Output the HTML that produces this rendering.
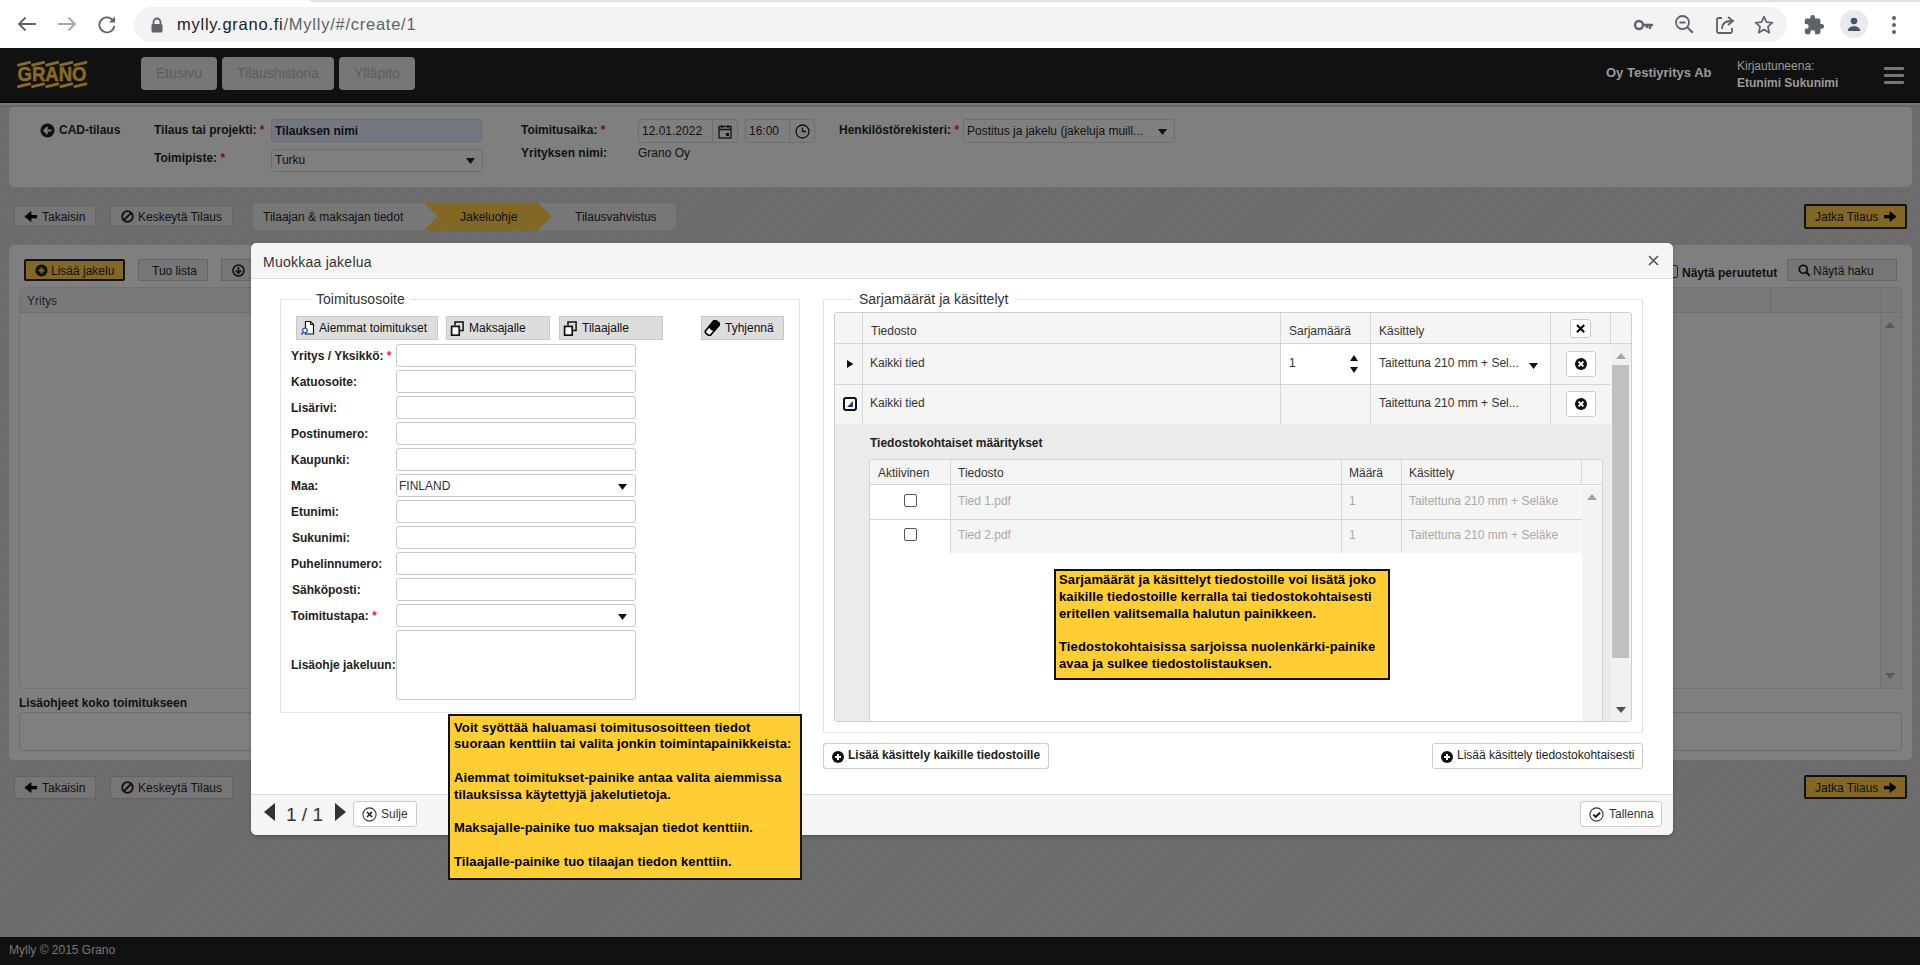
<!DOCTYPE html>
<html><head><meta charset="utf-8">
<style>
*{box-sizing:border-box;margin:0;padding:0}
html,body{width:1920px;height:965px;overflow:hidden}
body{position:relative;font-family:"Liberation Sans",sans-serif;font-size:12px;color:#111;background:#6c6c6c}
.a{position:absolute}
.t{position:absolute;white-space:nowrap;line-height:1}
.b{font-weight:bold}
/* chrome */
#chrome{left:0;top:0;width:1920px;height:48px;background:#fff}
#omni{left:134px;top:7px;width:1653px;height:35px;border-radius:18px;background:#f1f3f4}
/* header */
#hdr{left:0;top:48px;width:1920px;height:55px;background:#111}
.nav{top:57px;height:33px;border-radius:4px;background:#777;color:#5d5d5d;font-size:14px;text-align:center;line-height:33px}
/* page */
#page{left:0;top:103px;width:1920px;height:834px;background:#6c6c6c;
 background-image:repeating-linear-gradient(135deg,rgba(255,255,255,0) 0px,rgba(255,255,255,0) 9px,rgba(255,255,255,.015) 10px,rgba(255,255,255,0) 12px)}
.pnl{background:#7f7f7f;border-radius:5px}
.dbtn{background:#767676;border:1px solid #646464;color:#111;font-size:12px}
#foot{left:0;top:937px;width:1920px;height:28px;background:#111}

.mb{position:absolute;background:#ddd;border:1px solid #c8c8c8;}
.lbl{position:absolute;white-space:nowrap;line-height:1;font-weight:bold;font-size:12px;color:#222;left:291px}
.inp{position:absolute;left:396px;width:240px;height:23px;border:1px solid #c9c9c9;border-radius:3px;background:#fff}
.req{color:#e8262b}
.wb{position:absolute;background:#fff;border:1px solid #ccc;border-radius:3px}
.tip{position:absolute;background:#ffcd34;border:2px solid #111;font-weight:bold;font-size:13px;line-height:16.8px;color:#000;padding:0;white-space:nowrap;letter-spacing:.12px}
</style></head>
<body>
<!-- CHROME BAR -->
<div id="chrome" class="a"></div>
<div class="a" style="left:310px;top:0;width:1610px;height:2px;background:#dee1e6;border-bottom-left-radius:2px"></div>
<div id="omni" class="a"></div>
<!-- chrome icons -->
<svg class="a" style="left:16px;top:15px" width="22" height="18" viewBox="0 0 22 18"><path d="M20 9H3M9.5 2.5L3 9l6.5 6.5" fill="none" stroke="#5f6368" stroke-width="1.8"/></svg>
<svg class="a" style="left:56px;top:15px" width="22" height="18" viewBox="0 0 22 18"><path d="M2 9h17M12.5 2.5L19 9l-6.5 6.5" fill="none" stroke="#a5a8ac" stroke-width="1.8"/></svg>
<svg class="a" style="left:96px;top:14px" width="22" height="20" viewBox="0 0 22 20"><path d="M17 6.5A7.5 7.5 0 1 0 18.3 12" fill="none" stroke="#5f6368" stroke-width="1.8"/><path d="M19 2.5v6h-6z" fill="#5f6368"/></svg>
<svg class="a" style="left:150px;top:17px" width="14" height="16" viewBox="0 0 14 16"><path d="M3.5 7V5a3.5 3.5 0 0 1 7 0v2" fill="none" stroke="#5f6368" stroke-width="1.8"/><rect x="1.5" y="7" width="11" height="8.5" rx="1.5" fill="#5f6368"/></svg>
<div class="t" style="left:177px;top:16px;font-size:16.5px;letter-spacing:0.75px;color:#202124">mylly.grano.fi<span style="color:#5f6368">/Mylly/#/create/1</span></div>
<svg class="a" style="left:1633px;top:16px" width="22" height="18" viewBox="0 0 22 18"><circle cx="6" cy="9" r="4" fill="none" stroke="#5f6368" stroke-width="2.4"/><path d="M10 9h10M17 9v4M14 9v3" fill="none" stroke="#5f6368" stroke-width="2.4"/></svg>
<svg class="a" style="left:1674px;top:14px" width="22" height="22" viewBox="0 0 22 22"><circle cx="8.5" cy="8.5" r="6.5" fill="none" stroke="#5f6368" stroke-width="1.8"/><path d="M5.5 8.5h6M13.3 13.3l5.5 5.5" fill="none" stroke="#5f6368" stroke-width="2"/></svg>
<svg class="a" style="left:1714px;top:14px" width="22" height="22" viewBox="0 0 22 22"><path d="M8 4H4.5a1.5 1.5 0 0 0-1.5 1.5v12A1.5 1.5 0 0 0 4.5 19h12a1.5 1.5 0 0 0 1.5-1.5V14" fill="none" stroke="#5f6368" stroke-width="1.8"/><path d="M8 15c0-6 4-8 9-8" fill="none" stroke="#5f6368" stroke-width="1.8"/><path d="M14 3l5 4-5 4" fill="none" stroke="#5f6368" stroke-width="1.8"/></svg>
<svg class="a" style="left:1753px;top:14px" width="22" height="22" viewBox="0 0 24 24"><path d="M12 2.8l2.7 6.1 6.6.6-5 4.4 1.5 6.5L12 17l-5.8 3.4 1.5-6.5-5-4.4 6.6-.6z" fill="none" stroke="#5f6368" stroke-width="1.8" stroke-linejoin="round"/></svg>
<svg class="a" style="left:1803px;top:14px" width="22" height="22" viewBox="0 0 24 24"><path d="M20.5 11H19V7a2 2 0 0 0-2-2h-4V3.5a2.5 2.5 0 0 0-5 0V5H4a2 2 0 0 0-2 2v3.8h1.5a2.7 2.7 0 0 1 0 5.4H2V20a2 2 0 0 0 2 2h3.8v-1.5a2.7 2.7 0 0 1 5.4 0V22H17a2 2 0 0 0 2-2v-4h1.5a2.5 2.5 0 0 0 0-5z" fill="#5f6368"/></svg>
<div class="a" style="left:1840px;top:10px;width:28px;height:28px;border-radius:50%;background:#e8eaed"></div>
<svg class="a" style="left:1844px;top:14px" width="20" height="20" viewBox="0 0 20 20"><circle cx="10" cy="7" r="3.3" fill="#4a5568"/><path d="M3.8 17c0-3.2 3-4.8 6.2-4.8s6.2 1.6 6.2 4.8z" fill="#4a5568"/></svg>
<svg class="a" style="left:1890px;top:14px" width="8" height="22" viewBox="0 0 8 22"><circle cx="4" cy="4" r="2" fill="#5f6368"/><circle cx="4" cy="11" r="2" fill="#5f6368"/><circle cx="4" cy="18" r="2" fill="#5f6368"/></svg>


<!-- HEADER -->
<div id="hdr" class="a"></div>
<div class="a nav" style="left:141px;width:76px">Etusivu</div>
<div class="a nav" style="left:222px;width:112px">Tilaushistoria</div>
<div class="a nav" style="left:339px;width:76px">Ylläpito</div>


<!-- logo -->
<svg class="a" style="left:0;top:0" width="100" height="100" viewBox="0 0 100 100">
 <g stroke="#8a6b25" stroke-width="2.9" fill="none"><path d="M17.3 65.4L30.7 62.2"/><path d="M17.3 86.8L30.7 83.6"/><path d="M31.4 65.4L44.8 62.2"/><path d="M31.4 86.8L44.8 83.6"/><path d="M45.5 65.4L58.9 62.2"/><path d="M45.5 86.8L58.9 83.6"/><path d="M59.6 65.4L73.0 62.2"/><path d="M59.6 86.8L73.0 83.6"/><path d="M73.7 65.4L87.1 62.2"/><path d="M73.7 86.8L87.1 83.6"/></g>
 <text x="17.5" y="81.2" font-family="Liberation Sans" font-weight="bold" font-size="19.5" textLength="69" lengthAdjust="spacingAndGlyphs" fill="#8a6b25" stroke="#8a6b25" stroke-width="0.5">GRANO</text>
</svg>
<div class="t b" style="left:1606px;top:66px;font-size:13px;color:#9a9a9a">Oy Testiyritys Ab</div>
<div class="t" style="left:1737px;top:60px;font-size:12px;color:#9a9a9a">Kirjautuneena:</div>
<div class="t b" style="left:1737px;top:77px;font-size:12px;color:#9a9a9a">Etunimi Sukunimi</div>
<div class="a" style="left:1884px;top:67px;width:20px;height:3px;background:#777;border-radius:1px"></div>
<div class="a" style="left:1884px;top:74px;width:20px;height:3px;background:#777;border-radius:1px"></div>
<div class="a" style="left:1884px;top:81px;width:20px;height:3px;background:#777;border-radius:1px"></div>

<!-- PAGE -->
<div id="page" class="a"></div>
<div class="a" style="left:0;top:102px;width:1920px;height:1px;background:#000"></div><div class="a" style="left:0;top:103px;width:1920px;height:2px;background:#777"></div><div class="a" style="left:0;top:105px;width:1920px;height:2px;background:#676767"></div>
<div class="a pnl" style="left:9px;top:107px;width:1903px;height:80px"></div>

<!-- PANEL 1 content -->
<svg class="a" style="left:40px;top:123px" width="15" height="15" viewBox="0 0 15 15"><circle cx="7.5" cy="7.5" r="7" fill="#111"/><path d="M11.5 7.5H4.5M7.5 4.3L4.3 7.5l3.2 3.2" fill="none" stroke="#7f7f7f" stroke-width="2"/></svg>
<div class="t b" style="left:59px;top:124px;font-size:12px;color:#111">CAD-tilaus</div>
<div class="t b" style="left:154px;top:124px;font-size:12px;color:#111">Tilaus tai projekti: <span style="color:#7a1010">*</span></div>
<div class="t b" style="left:154px;top:152px;font-size:12px;color:#111">Toimipiste: <span style="color:#7a1010">*</span></div>
<div class="a" style="left:271px;top:119px;width:211px;height:23px;border:1px solid #6e6e6e;border-radius:3px;background:#737880"></div>
<div class="t b" style="left:275px;top:125px;font-size:12px;color:#111">Tilauksen nimi</div>
<div class="a" style="left:271px;top:149px;width:212px;height:23px;border:1px solid #6e6e6e;border-radius:3px;background:#7f7f7f"></div>
<div class="t" style="left:275px;top:154px;font-size:12px;color:#111">Turku</div>
<svg class="a" style="left:466px;top:158px" width="9" height="6" viewBox="0 0 9 6"><path d="M0 0h9L4.5 6z" fill="#111"/></svg>

<div class="t b" style="left:521px;top:124px;font-size:12px;color:#111">Toimitusaika: <span style="color:#7a1010">*</span></div>
<div class="t b" style="left:521px;top:147px;font-size:12px;color:#111">Yrityksen nimi:</div>
<div class="a" style="left:638px;top:119px;width:100px;height:24px;border:1px solid #6e6e6e;border-radius:3px"></div>
<div class="a" style="left:712px;top:120px;width:1px;height:22px;background:#6e6e6e"></div>
<div class="t" style="left:642px;top:125px;font-size:12px;color:#111">12.01.2022</div>
<svg class="a" style="left:718px;top:124px" width="14" height="15" viewBox="0 0 14 15"><rect x="1" y="2.5" width="12" height="11.5" fill="none" stroke="#111" stroke-width="1.3"/><path d="M1 5.5h12M4 1v3M10 1v3" stroke="#111" stroke-width="1.3"/><rect x="8" y="9" width="3" height="3" fill="#111"/></svg>
<div class="a" style="left:745px;top:119px;width:70px;height:24px;border:1px solid #6e6e6e;border-radius:3px"></div>
<div class="a" style="left:789px;top:120px;width:1px;height:22px;background:#6e6e6e"></div>
<div class="t" style="left:749px;top:125px;font-size:12px;color:#111">16:00</div>
<svg class="a" style="left:795px;top:124px" width="15" height="15" viewBox="0 0 15 15"><circle cx="7.5" cy="7.5" r="6.5" fill="none" stroke="#111" stroke-width="1.3"/><path d="M7.5 3.5v4h3.5" fill="none" stroke="#111" stroke-width="1.3"/></svg>
<div class="t" style="left:638px;top:147px;font-size:12px;color:#111">Grano Oy</div>

<div class="t b" style="left:839px;top:124px;font-size:12px;color:#111">Henkilöstörekisteri: <span style="color:#7a1010">*</span></div>
<div class="a" style="left:963px;top:119px;width:212px;height:24px;border:1px solid #6e6e6e;border-radius:3px"></div>
<div class="t" style="left:967px;top:125px;font-size:12px;color:#111">Postitus ja jakelu (jakeluja muill...</div>
<svg class="a" style="left:1158px;top:129px" width="9" height="6" viewBox="0 0 9 6"><path d="M0 0h9L4.5 6z" fill="#111"/></svg>

<!-- wizard row -->
<div class="a dbtn" style="left:14px;top:205px;width:82px;height:22px"></div>
<svg class="a" style="left:24px;top:211px" width="14" height="12" viewBox="0 0 14 12"><path d="M0.8 5.6L7 0.8V10.4z" fill="#000" stroke="#000" stroke-width="0.8" stroke-linejoin="round"/><rect x="6" y="4" width="7" height="3.3" fill="#000"/></svg>
<div class="t" style="left:42px;top:211px;font-size:12px;color:#111">Takaisin</div>
<div class="a dbtn" style="left:110px;top:205px;width:123px;height:22px"></div>
<svg class="a" style="left:121px;top:210px" width="13" height="13" viewBox="0 0 13 13"><circle cx="6.5" cy="6.5" r="5.3" fill="none" stroke="#111" stroke-width="1.8"/><path d="M3 10L10 3" stroke="#111" stroke-width="1.8"/></svg>
<div class="t" style="left:138px;top:211px;font-size:12px;color:#111">Keskeytä Tilaus</div>

<svg class="a" style="left:252px;top:202px" width="425" height="29" viewBox="0 0 425 29">
 <path d="M4 0.5H421a3.5 3.5 0 0 1 3.5 3.5v21a3.5 3.5 0 0 1-3.5 3.5H4A3.5 3.5 0 0 1 .5 25V4A3.5 3.5 0 0 1 4 .5z" fill="#777" stroke="#6c6c6c"/>
 <path d="M172 0.5H286l13.5 14-13.5 14H172l13.5-14z" fill="#836725"/>
</svg>
<div class="t" style="left:263px;top:211px;font-size:12px;color:#111">Tilaajan &amp; maksajan tiedot</div>
<div class="t" style="left:460px;top:211px;font-size:12px;color:#111">Jakeluohje</div>
<div class="t" style="left:575px;top:211px;font-size:12px;color:#111">Tilausvahvistus</div>

<div class="a" style="left:1804px;top:204px;width:103px;height:25px;background:#836725;border:2px solid #111;border-radius:2px"></div>
<div class="t" style="left:1815px;top:211px;font-size:12px;color:#111">Jatka Tilaus</div>
<svg class="a" style="left:1883px;top:211px" width="14" height="12" viewBox="0 0 14 12"><path d="M13.2 5.6L7 0.8V10.4z" fill="#000" stroke="#000" stroke-width="0.8" stroke-linejoin="round"/><rect x="1" y="4" width="7" height="3.3" fill="#000"/></svg>

<div class="a pnl" style="left:9px;top:245px;width:1903px;height:515px"></div>


<!-- PANEL 2 content -->
<div class="a" style="left:24px;top:259px;width:101px;height:22px;background:#836725;border:2px solid #111;border-radius:2px"></div>
<svg class="a" style="left:35px;top:264px" width="13" height="13" viewBox="0 0 13 13"><circle cx="6.5" cy="6.5" r="6" fill="#111"/><path d="M6.5 3.5v6M3.5 6.5h6" stroke="#836725" stroke-width="2"/></svg>
<div class="t" style="left:51px;top:265px;font-size:12px;color:#111">Lisää jakelu</div>
<div class="a dbtn" style="left:138px;top:259px;width:70px;height:22px"></div>
<div class="t" style="left:152px;top:265px;font-size:12px;color:#111">Tuo lista</div>
<div class="a dbtn" style="left:221px;top:259px;width:60px;height:22px"></div>
<svg class="a" style="left:232px;top:264px" width="13" height="13" viewBox="0 0 13 13"><circle cx="6.5" cy="6.5" r="5.5" fill="none" stroke="#111" stroke-width="1.6"/><path d="M6.5 3v6M3.8 6.5l2.7 2.8 2.7-2.8" fill="none" stroke="#111" stroke-width="1.8"/></svg>
<!-- grid behind -->
<div class="a" style="left:19px;top:287px;width:1883px;height:402px;border:1px solid #717171;border-radius:3px;background:#7f7f7f"></div>
<div class="a" style="left:20px;top:288px;width:1881px;height:25px;background:#797979;border-bottom:1px solid #6f6f6f"></div>
<div class="t" style="left:27px;top:295px;font-size:12px;color:#222">Yritys</div>
<div class="a" style="left:1770px;top:288px;width:1px;height:25px;background:#6f6f6f"></div>
<div class="a" style="left:1880px;top:288px;width:1px;height:400px;background:#727272"></div>
<div class="a" style="left:1881px;top:314px;width:20px;height:374px;background:#7b7b7b"></div>
<svg class="a" style="left:1885px;top:322px" width="10" height="6" viewBox="0 0 10 6"><path d="M0 6h10L5 0z" fill="#5a5a5a"/></svg>
<svg class="a" style="left:1885px;top:673px" width="10" height="6" viewBox="0 0 10 6"><path d="M0 0h10L5 6z" fill="#5a5a5a"/></svg>
<div class="t b" style="left:1682px;top:267px;font-size:12px;color:#111">Näytä peruutetut</div>
<div class="a" style="left:1666px;top:265px;width:12px;height:13px;border:1px solid #222;border-radius:2px"></div>
<div class="a dbtn" style="left:1787px;top:259px;width:110px;height:22px"></div>
<svg class="a" style="left:1798px;top:264px" width="13" height="13" viewBox="0 0 13 13"><circle cx="5.3" cy="5.3" r="4" fill="none" stroke="#111" stroke-width="1.8"/><path d="M8.2 8.2l3.5 3.5" stroke="#111" stroke-width="2.2"/></svg>
<div class="t" style="left:1813px;top:265px;font-size:12px;color:#111">Näytä haku</div>
<div class="t b" style="left:19px;top:697px;font-size:12px;color:#111">Lisäohjeet koko toimitukseen</div>
<div class="a" style="left:19px;top:712px;width:1883px;height:39px;border:1px solid #6c6c6c;border-radius:3px;background:#7f7f7f"></div>

<!-- bottom buttons -->
<div class="a dbtn" style="left:14px;top:776px;width:82px;height:23px"></div>
<svg class="a" style="left:24px;top:782px" width="14" height="12" viewBox="0 0 14 12"><path d="M0.8 5.6L7 0.8V10.4z" fill="#000" stroke="#000" stroke-width="0.8" stroke-linejoin="round"/><rect x="6" y="4" width="7" height="3.3" fill="#000"/></svg>
<div class="t" style="left:42px;top:782px;font-size:12px;color:#111">Takaisin</div>
<div class="a dbtn" style="left:110px;top:776px;width:123px;height:23px"></div>
<svg class="a" style="left:121px;top:781px" width="13" height="13" viewBox="0 0 13 13"><circle cx="6.5" cy="6.5" r="5.3" fill="none" stroke="#111" stroke-width="1.8"/><path d="M3 10L10 3" stroke="#111" stroke-width="1.8"/></svg>
<div class="t" style="left:138px;top:782px;font-size:12px;color:#111">Keskeytä Tilaus</div>
<div class="a" style="left:1804px;top:775px;width:103px;height:24px;background:#836725;border:2px solid #111;border-radius:2px"></div>
<div class="t" style="left:1815px;top:782px;font-size:12px;color:#111">Jatka Tilaus</div>
<svg class="a" style="left:1883px;top:782px" width="14" height="12" viewBox="0 0 14 12"><path d="M13.2 5.6L7 0.8V10.4z" fill="#000" stroke="#000" stroke-width="0.8" stroke-linejoin="round"/><rect x="1" y="4" width="7" height="3.3" fill="#000"/></svg>

<div id="foot" class="a"></div>
<div class="t" style="left:9px;top:944px;color:#777;font-size:12px">Mylly © 2015 Grano</div>

<!-- MODAL -->
<div class="a" style="left:251px;top:243px;width:1422px;height:592px;background:#fff;border-radius:6px;box-shadow:0 2px 4px rgba(0,0,0,.2);overflow:hidden">
 <div class="a" style="left:0;top:0;width:1422px;height:36px;background:#f5f5f5;border-bottom:1px solid #dcdcdc"></div>
 <div class="a" style="left:0;top:551px;width:1422px;height:41px;background:#f5f5f5;border-top:1px solid #dcdcdc"></div>
</div>
<div class="t" style="left:263px;top:255px;font-size:14px;letter-spacing:0.25px;color:#333">Muokkaa jakelua</div>
<svg class="a" style="left:1648px;top:255px" width="11" height="11" viewBox="0 0 11 11"><path d="M1 1l9 9M10 1l-9 9" stroke="#555" stroke-width="1.6"/></svg>

<!-- left fieldset -->
<div class="a" style="left:280px;top:299px;width:520px;height:414px;border:1px solid #e3e3e3"></div>
<div class="a" style="left:311px;top:295px;width:99px;height:10px;background:#fff"></div>
<div class="t" style="left:316px;top:292px;font-size:14px;color:#333">Toimitusosoite</div>

<div class="mb" style="left:296px;top:316px;width:142px;height:24px"></div>
<svg class="a" style="left:300px;top:320px" width="16" height="16" viewBox="0 0 16 16"><path d="M5.5 1.5h5l3 3v9.5h-8z" fill="#fff" stroke="#111" stroke-width="1.2"/><path d="M10.5 1.5v3h3" fill="none" stroke="#111" stroke-width="1"/><circle cx="5" cy="10.5" r="2.3" fill="#fff" stroke="#2a5db0" stroke-width="1.3"/><path d="M3.4 12.2L1.2 14.5" stroke="#2a5db0" stroke-width="1.6"/></svg>
<div class="t" style="left:319px;top:322px;font-size:12px;color:#111">Aiemmat toimitukset</div>
<div class="mb" style="left:446px;top:316px;width:104px;height:24px"></div>
<svg class="a" style="left:450px;top:321px" width="15" height="15" viewBox="0 0 15 15"><rect x="1.6" y="5.4" width="7.6" height="8.8" fill="#fff" stroke="#111" stroke-width="1.7"/><path d="M5 4.6V1.1h8.1v8.5H10" fill="none" stroke="#111" stroke-width="1.5"/></svg>
<div class="t" style="left:469px;top:322px;font-size:12px;color:#111">Maksajalle</div>
<div class="mb" style="left:559px;top:316px;width:104px;height:24px"></div>
<svg class="a" style="left:563px;top:321px" width="15" height="15" viewBox="0 0 15 15"><rect x="1.6" y="5.4" width="7.6" height="8.8" fill="#fff" stroke="#111" stroke-width="1.7"/><path d="M5 4.6V1.1h8.1v8.5H10" fill="none" stroke="#111" stroke-width="1.5"/></svg>
<div class="t" style="left:582px;top:322px;font-size:12px;color:#111">Tilaajalle</div>
<div class="mb" style="left:701px;top:316px;width:83px;height:24px"></div>
<svg class="a" style="left:704px;top:320px" width="16" height="16" viewBox="0 0 16 16"><g transform="translate(8.2,8) rotate(40)"><rect x="-3.3" y="-8" width="6.6" height="16" rx="2" fill="#fff" stroke="#000" stroke-width="1.7"/><path d="M-4.1 -6a2 2 0 0 1 2-2.8h4.2a2 2 0 0 1 2 2v7.8l-3.6 1.2 -4.6-0.4z" fill="#000"/></g></svg>
<div class="t" style="left:725px;top:322px;font-size:12px;color:#111">Tyhjennä</div>

<div class="lbl" style="top:350px">Yritys / Yksikkö: <span class="req">*</span></div>
<div class="lbl" style="top:376px">Katuosoite:</div>
<div class="lbl" style="top:402px">Lisärivi:</div>
<div class="lbl" style="top:428px">Postinumero:</div>
<div class="lbl" style="top:454px">Kaupunki:</div>
<div class="lbl" style="top:480px">Maa:</div>
<div class="lbl" style="top:506px">Etunimi:</div>
<div class="lbl" style="top:532px;left:292px">Sukunimi:</div>
<div class="lbl" style="top:558px">Puhelinnumero:</div>
<div class="lbl" style="top:584px;left:292px">Sähköposti:</div>
<div class="lbl" style="top:610px">Toimitustapa: <span class="req">*</span></div>
<div class="lbl" style="top:659px">Lisäohje jakeluun:</div>
<div class="inp" style="top:344px"></div>
<div class="inp" style="top:370px"></div>
<div class="inp" style="top:396px"></div>
<div class="inp" style="top:422px"></div>
<div class="inp" style="top:448px"></div>
<div class="inp" style="top:474px"></div>
<div class="t" style="left:399px;top:480px;font-size:12px;color:#333">FINLAND</div>
<svg class="a" style="left:618px;top:484px" width="9" height="6" viewBox="0 0 9 6"><path d="M0 0h9L4.5 6z" fill="#111"/></svg>
<div class="inp" style="top:500px"></div>
<div class="inp" style="top:526px"></div>
<div class="inp" style="top:552px"></div>
<div class="inp" style="top:578px"></div>
<div class="inp" style="top:604px"></div>
<svg class="a" style="left:618px;top:614px" width="9" height="6" viewBox="0 0 9 6"><path d="M0 0h9L4.5 6z" fill="#111"/></svg>
<div class="inp" style="top:630px;height:70px"></div>

<!-- right fieldset -->
<div class="a" style="left:823px;top:299px;width:820px;height:434px;border:1px solid #e3e3e3"></div>
<div class="a" style="left:853px;top:295px;width:162px;height:10px;background:#fff"></div>
<div class="t" style="left:859px;top:292px;font-size:14px;color:#333">Sarjamäärät ja käsittelyt</div>

<!-- outer grid -->
<div class="a" style="left:834px;top:312px;width:798px;height:410px;border:1px solid #cfcfcf;border-radius:3px;background:#f5f5f5;overflow:hidden">
 <div class="a" style="left:0;top:30px;width:796px;height:1px;background:#d5d5d5"></div>
 <div class="a" style="left:1;top:71px;width:775px;height:1px;background:#d5d5d5"></div>
 <div class="a" style="left:445px;top:31px;width:90px;height:40px;background:#fff"></div>
 <div class="a" style="left:535px;top:31px;width:180px;height:40px;background:#fff"></div>
 <div class="a" style="left:27px;top:0;width:1px;height:111px;background:#d5d5d5"></div>
 <div class="a" style="left:445px;top:0;width:1px;height:111px;background:#d5d5d5"></div>
 <div class="a" style="left:535px;top:0;width:1px;height:111px;background:#d5d5d5"></div>
 <div class="a" style="left:715px;top:0;width:1px;height:111px;background:#d5d5d5"></div>
 <div class="a" style="left:775px;top:0;width:1px;height:31px;background:#d5d5d5"></div>
 <div class="a" style="left:0;top:111px;width:776px;height:297px;background:#ebebeb"></div>
 <div class="a" style="left:776px;top:31px;width:20px;height:377px;background:#f1f1f1"></div>
</div>
<div class="t" style="left:871px;top:325px;font-size:12px;color:#333">Tiedosto</div>
<div class="t" style="left:1289px;top:325px;font-size:12px;color:#333">Sarjamäärä</div>
<div class="t" style="left:1379px;top:325px;font-size:12px;color:#333">Käsittely</div>
<div class="wb" style="left:1570px;top:319px;width:21px;height:19px"></div>
<svg class="a" style="left:1575px;top:323px" width="11" height="11" viewBox="0 0 11 11"><path d="M2 2l7.2 7.2M9.2 2L2 9.2" stroke="#000" stroke-width="2"/></svg>

<svg class="a" style="left:847px;top:360px" width="7" height="8" viewBox="0 0 7 8"><path d="M0 0v8l6.5-4z" fill="#111"/></svg>
<div class="t" style="left:870px;top:357px;font-size:12px;color:#333">Kaikki tied</div>
<div class="t" style="left:1289px;top:357px;font-size:12px;color:#333">1</div>
<svg class="a" style="left:1350px;top:355px" width="8" height="18" viewBox="0 0 8 18"><path d="M0 6h8L4 0z M0 12h8L4 18z" fill="#111"/></svg>
<div class="t" style="left:1379px;top:357px;font-size:12px;color:#333">Taitettuna 210 mm + Sel...</div>
<svg class="a" style="left:1529px;top:363px" width="9" height="6" viewBox="0 0 9 6"><path d="M0 0h9L4.5 6z" fill="#111"/></svg>
<div class="wb" style="left:1566px;top:351px;width:30px;height:26px"></div>
<svg class="a" style="left:1575px;top:358px" width="12" height="12" viewBox="0 0 12 12"><circle cx="6" cy="6" r="6" fill="#111"/><path d="M3.6 3.6l4.8 4.8M8.4 3.6l-4.8 4.8" stroke="#fff" stroke-width="1.9"/></svg>

<div class="a" style="left:843px;top:397px;width:14px;height:14px;border:2px solid #111;border-radius:3px;background:#fff"></div>
<svg class="a" style="left:847px;top:401px" width="6" height="6" viewBox="0 0 6 6"><path d="M6 0v6H0z" fill="#1d3f7a"/></svg>
<div class="t" style="left:870px;top:397px;font-size:12px;color:#333">Kaikki tied</div>
<div class="t" style="left:1379px;top:397px;font-size:12px;color:#333">Taitettuna 210 mm + Sel...</div>
<div class="wb" style="left:1566px;top:391px;width:30px;height:26px"></div>
<svg class="a" style="left:1575px;top:398px" width="12" height="12" viewBox="0 0 12 12"><circle cx="6" cy="6" r="6" fill="#111"/><path d="M3.6 3.6l4.8 4.8M8.4 3.6l-4.8 4.8" stroke="#fff" stroke-width="1.9"/></svg>

<!-- outer scrollbar -->
<svg class="a" style="left:1616px;top:353px" width="10" height="6" viewBox="0 0 10 6"><path d="M0 6h10L5 0z" fill="#a3a3a3"/></svg>
<div class="a" style="left:1612px;top:365px;width:17px;height:293px;background:#c1c1c1"></div>
<svg class="a" style="left:1616px;top:707px" width="10" height="6" viewBox="0 0 10 6"><path d="M0 0h10L5 6z" fill="#505050"/></svg>

<!-- detail -->
<div class="t b" style="left:870px;top:437px;font-size:12px;color:#222">Tiedostokohtaiset määritykset</div>
<div class="a" style="left:869px;top:459px;width:734px;height:262px;border:1px solid #d2d2d2;border-bottom:none;border-radius:3px 3px 0 0;background:#fff;overflow:hidden">
 <div class="a" style="left:0;top:0;width:732px;height:25px;background:#f5f5f5;border-bottom:1px solid #d5d5d5"></div>
 <div class="a" style="left:81px;top:26px;width:631px;height:67px;background:#f5f5f5"></div>
 <div class="a" style="left:0;top:59px;width:712px;height:1px;background:#d5d5d5"></div>
 <div class="a" style="left:80px;top:0;width:1px;height:93px;background:#d5d5d5"></div>
 <div class="a" style="left:471px;top:0;width:1px;height:93px;background:#d5d5d5"></div>
 <div class="a" style="left:531px;top:0;width:1px;height:93px;background:#d5d5d5"></div>
 <div class="a" style="left:711px;top:0;width:1px;height:25px;background:#d5d5d5"></div>
 <div class="a" style="left:712px;top:26px;width:20px;height:240px;background:#f3f3f3"></div>
</div>
<div class="t" style="left:878px;top:467px;font-size:12px;color:#333">Aktiivinen</div>
<div class="t" style="left:958px;top:467px;font-size:12px;color:#333">Tiedosto</div>
<div class="t" style="left:1349px;top:467px;font-size:12px;color:#333">Määrä</div>
<div class="t" style="left:1409px;top:467px;font-size:12px;color:#333">Käsittely</div>
<div class="a" style="left:904px;top:494px;width:13px;height:13px;border:1px solid #555;border-radius:2px;background:#fff"></div>
<div class="a" style="left:904px;top:528px;width:13px;height:13px;border:1px solid #555;border-radius:2px;background:#fff"></div>
<div class="t" style="left:958px;top:495px;font-size:12px;color:#a9a9a9">Tied 1.pdf</div>
<div class="t" style="left:1349px;top:495px;font-size:12px;color:#a9a9a9">1</div>
<div class="t" style="left:1409px;top:495px;font-size:12px;color:#a9a9a9">Taitettuna 210 mm + Seläke</div>
<div class="t" style="left:958px;top:529px;font-size:12px;color:#a9a9a9">Tied 2.pdf</div>
<div class="t" style="left:1349px;top:529px;font-size:12px;color:#a9a9a9">1</div>
<div class="t" style="left:1409px;top:529px;font-size:12px;color:#a9a9a9">Taitettuna 210 mm + Seläke</div>
<svg class="a" style="left:1587px;top:494px" width="10" height="6" viewBox="0 0 10 6"><path d="M0 6h10L5 0z" fill="#a3a3a3"/></svg>

<!-- bottom buttons -->
<div class="wb" style="left:823px;top:743px;width:226px;height:26px"></div>
<svg class="a" style="left:832px;top:751px" width="12" height="12" viewBox="0 0 12 12"><circle cx="6" cy="6" r="6" fill="#111"/><path d="M6 3v6M3 6h6" stroke="#fff" stroke-width="2"/></svg>
<div class="t b" style="left:848px;top:749px;font-size:12px;color:#222">Lisää käsittely kaikille tiedostoille</div>
<div class="wb" style="left:1432px;top:743px;width:211px;height:26px"></div>
<svg class="a" style="left:1441px;top:751px" width="12" height="12" viewBox="0 0 12 12"><circle cx="6" cy="6" r="6" fill="#111"/><path d="M6 3v6M3 6h6" stroke="#fff" stroke-width="2"/></svg>
<div class="t" style="left:1457px;top:749px;font-size:12px;color:#222">Lisää käsittely tiedostokohtaisesti</div>

<!-- modal footer -->
<svg class="a" style="left:264px;top:803px" width="11" height="18" viewBox="0 0 11 18"><path d="M11 0v18L0 9z" fill="#333"/></svg>
<div class="t" style="left:286px;top:805px;font-size:19px;color:#333">1 / 1</div>
<svg class="a" style="left:335px;top:803px" width="11" height="18" viewBox="0 0 11 18"><path d="M0 0v18l11-9z" fill="#333"/></svg>
<div class="wb" style="left:353px;top:801px;width:64px;height:26px"></div>
<svg class="a" style="left:362px;top:807px" width="15" height="15" viewBox="0 0 15 15"><circle cx="7.5" cy="7.5" r="6.6" fill="none" stroke="#333" stroke-width="1.1"/><path d="M5 5l5 5M10 5l-5 5" stroke="#222" stroke-width="1.7"/></svg>
<div class="t" style="left:381px;top:808px;font-size:12px;color:#333">Sulje</div>
<div class="wb" style="left:1580px;top:801px;width:82px;height:26px"></div>
<svg class="a" style="left:1589px;top:807px" width="15" height="15" viewBox="0 0 15 15"><circle cx="7.5" cy="7.5" r="6.6" fill="none" stroke="#333" stroke-width="1.1"/><path d="M4.3 7.6l2.4 2.3 4.3-4.2" fill="none" stroke="#111" stroke-width="1.9"/></svg>
<div class="t" style="left:1609px;top:808px;font-size:12px;color:#333">Tallenna</div>

<!-- TOOLTIPS -->
<div class="tip" style="left:448px;top:714px;width:354px;height:166px;padding:3.5px 0 0 4px">Voit syöttää haluamasi toimitusosoitteen tiedot<br>suoraan kenttiin tai valita jonkin toimintapainikkeista:<br><br>Aiemmat toimitukset-painike antaa valita aiemmissa<br>tilauksissa käytettyjä jakelutietoja.<br><br>Maksajalle-painike tuo maksajan tiedot kenttiin.<br><br>Tilaajalle-painike tuo tilaajan tiedon kenttiin.</div>
<div class="tip" style="left:1054px;top:569px;width:336px;height:111px;padding:1px 0 0 3px">Sarjamäärät ja käsittelyt tiedostoille voi lisätä joko<br>kaikille tiedostoille kerralla tai tiedostokohtaisesti<br>eritellen valitsemalla halutun painikkeen.<br><br>Tiedostokohtaisissa sarjoissa nuolenkärki-painike<br>avaa ja sulkee tiedostolistauksen.</div>

</body></html>
